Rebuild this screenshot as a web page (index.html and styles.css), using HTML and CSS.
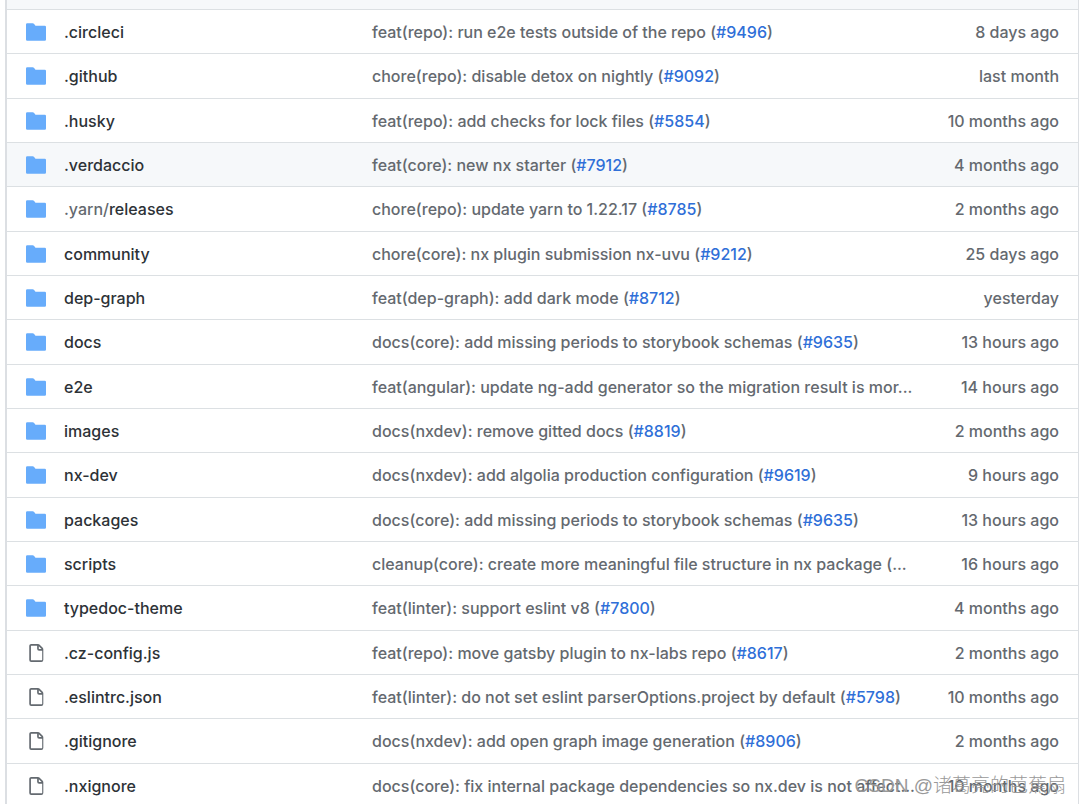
FILE: index.html
```html
<!DOCTYPE html>
<html lang="en">
<head>
<meta charset="utf-8">
<title>Repository files</title>
<link rel="stylesheet" href="styles.css">
</head>
<body>
<svg class="sprite" aria-hidden="true">
  <symbol id="dir" viewBox="0 0 16 16"><path d="M1 1A1 1 0 000 2v12a1 1 0 001 1h14a1 1 0 001-1V4a1 1 0 00-1-1H7.750a.4.4 0 01-.3-.15l-.95-1.250c-.33-.4-.75-.6-1.200-.6H1z"/></symbol>
  <symbol id="file" viewBox="0 0 16 16"><path fill-rule="evenodd" d="M3.750 1.500a.25.25 0 00-.25.25v12.500c0 .138.112.25.25.25h9.500a.25.25 0 00.25-.25V6H10.750A1.750 1.750 0 019 4.250V1.500H3.750zm6.750.562V4.250c0 .138.112.25.25.25h2.188l-2.438-2.438zM2 1.750C2 .784 2.784 0 3.750 0h6.086c.464 0 .909.184 1.237.513l2.914 2.914c.329.328.513.773.513 1.237v9.586A1.750 1.750 0 0112.750 16h-9A1.750 1.750 0 012 14.250V1.750z"/></symbol>
</svg>
<main class="page">
<div class="box">
<div class="box-header"></div>
<table class="files">
<tbody>
<tr><td class="icon"><svg class="dir"><use href="#dir"/></svg></td><td class="name"><a href="#">.circleci</a></td><td class="message">feat(repo): run e2e tests outside of the repo (<a href="#">#9496</a>)</td><td class="age">8 days ago</td></tr>
<tr><td class="icon"><svg class="dir"><use href="#dir"/></svg></td><td class="name"><a href="#">.github</a></td><td class="message">chore(repo): disable detox on nightly (<a href="#">#9092</a>)</td><td class="age">last month</td></tr>
<tr><td class="icon"><svg class="dir"><use href="#dir"/></svg></td><td class="name"><a href="#">.husky</a></td><td class="message">feat(repo): add checks for lock files (<a href="#">#5854</a>)</td><td class="age">10 months ago</td></tr>
<tr class="active"><td class="icon"><svg class="dir"><use href="#dir"/></svg></td><td class="name"><a href="#">.verdaccio</a></td><td class="message">feat(core): new nx starter (<a href="#">#7912</a>)</td><td class="age">4 months ago</td></tr>
<tr><td class="icon"><svg class="dir"><use href="#dir"/></svg></td><td class="name"><a href="#"><span class="parent">.yarn/</span>releases</a></td><td class="message">chore(repo): update yarn to 1.22.17 (<a href="#">#8785</a>)</td><td class="age">2 months ago</td></tr>
<tr><td class="icon"><svg class="dir"><use href="#dir"/></svg></td><td class="name"><a href="#">community</a></td><td class="message">chore(core): nx plugin submission nx-uvu (<a href="#">#9212</a>)</td><td class="age">25 days ago</td></tr>
<tr><td class="icon"><svg class="dir"><use href="#dir"/></svg></td><td class="name"><a href="#">dep-graph</a></td><td class="message">feat(dep-graph): add dark mode (<a href="#">#8712</a>)</td><td class="age">yesterday</td></tr>
<tr><td class="icon"><svg class="dir"><use href="#dir"/></svg></td><td class="name"><a href="#">docs</a></td><td class="message">docs(core): add missing periods to storybook schemas (<a href="#">#9635</a>)</td><td class="age">13 hours ago</td></tr>
<tr><td class="icon"><svg class="dir"><use href="#dir"/></svg></td><td class="name"><a href="#">e2e</a></td><td class="message">feat(angular): update ng-add generator so the migration result is mor...</td><td class="age">14 hours ago</td></tr>
<tr><td class="icon"><svg class="dir"><use href="#dir"/></svg></td><td class="name"><a href="#">images</a></td><td class="message">docs(nxdev): remove gitted docs (<a href="#">#8819</a>)</td><td class="age">2 months ago</td></tr>
<tr><td class="icon"><svg class="dir"><use href="#dir"/></svg></td><td class="name"><a href="#">nx-dev</a></td><td class="message">docs(nxdev): add algolia production configuration (<a href="#">#9619</a>)</td><td class="age">9 hours ago</td></tr>
<tr><td class="icon"><svg class="dir"><use href="#dir"/></svg></td><td class="name"><a href="#">packages</a></td><td class="message">docs(core): add missing periods to storybook schemas (<a href="#">#9635</a>)</td><td class="age">13 hours ago</td></tr>
<tr><td class="icon"><svg class="dir"><use href="#dir"/></svg></td><td class="name"><a href="#">scripts</a></td><td class="message">cleanup(core): create more meaningful file structure in nx package (...</td><td class="age">16 hours ago</td></tr>
<tr><td class="icon"><svg class="dir"><use href="#dir"/></svg></td><td class="name"><a href="#">typedoc-theme</a></td><td class="message">feat(linter): support eslint v8 (<a href="#">#7800</a>)</td><td class="age">4 months ago</td></tr>
<tr><td class="icon"><svg class="file"><use href="#file"/></svg></td><td class="name"><a href="#">.cz-config.js</a></td><td class="message">feat(repo): move gatsby plugin to nx-labs repo (<a href="#">#8617</a>)</td><td class="age">2 months ago</td></tr>
<tr><td class="icon"><svg class="file"><use href="#file"/></svg></td><td class="name"><a href="#">.eslintrc.json</a></td><td class="message">feat(linter): do not set eslint parserOptions.project by default (<a href="#">#5798</a>)</td><td class="age">10 months ago</td></tr>
<tr><td class="icon"><svg class="file"><use href="#file"/></svg></td><td class="name"><a href="#">.gitignore</a></td><td class="message">docs(nxdev): add open graph image generation (<a href="#">#8906</a>)</td><td class="age">2 months ago</td></tr>
<tr><td class="icon"><svg class="file"><use href="#file"/></svg></td><td class="name"><a href="#">.nxignore</a></td><td class="message">docs(core): fix internal package dependencies so nx.dev is not affect...</td><td class="age">10 months ago</td></tr>
</tbody>
</table>
</div>
<div class="watermark">CSDN @诸葛亮的芭蕉扇</div>
</main>
</body>
</html>
```
FILE: styles.css
```css
* { box-sizing: border-box; }
body {
  margin: 0;
  background: #fff;
  color: #64696f;
  font-family: Inter, "Noto Sans CJK SC", sans-serif;
  font-size: 16px;
  font-weight: 500;
  line-height: 24px;
}
.sprite { position: absolute; width: 0; height: 0; }
.page {
  position: relative;
  height: 100vh;
  padding: 0 1px 0 5px;
  overflow: hidden;
}
.box {
  border: solid #dcdfe3;
  border-width: 0 1px 0 2px;
}
.box-header { height: 9px; background: #f6f8fa; }
.files {
  width: 100%;
  table-layout: fixed;
  border-collapse: separate;
  border-spacing: 0;
}
.files td {
  height: 44px;
  padding: 0;
  border-top: 1px solid #dce0e3;
  vertical-align: middle;
  white-space: nowrap;
}
.files tr:nth-child(3n + 2) td { height: 45px; }
.files .active { background: #f6f8fa; }
.files .icon { width: 57px; padding: 0 18px; }
.files .name { width: 308px; }
.files .age { width: 156px; padding-right: 19px; text-align: right; }
.icon svg { display: block; margin: 0 auto; }
.dir { width: 20px; height: 20px; fill: #67acfb; }
.file { width: 18px; height: 18px; fill: #646a70; }
a { color: #2f6fd8; text-decoration: none; }
.name a { color: #2d3237; }
.name .parent { color: #64696f; }
.watermark {
  position: absolute;
  right: 14px;
  bottom: 6px;
  color: #999;
  font-family: "Liberation Sans", "Noto Sans CJK SC", sans-serif;
  font-weight: 300;
  font-size: 19px;
  white-space: nowrap;
}
```
